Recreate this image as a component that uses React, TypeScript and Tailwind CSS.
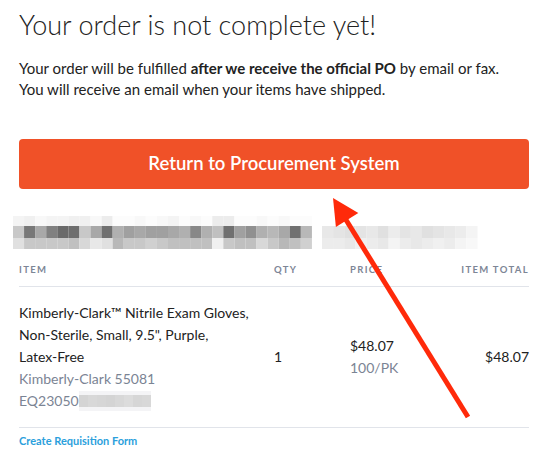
import React from "react";

const ROW1 = ["f4","f0","f8","f4","f4","f0","f0","f8","ec","fc","fc","f8","fc","f8","f4","fc","f8","fc","ec","ec","fc","fc","f8","fc","f8","fc","fc"];
const ROW2 = ["c8","78","a8","80","6a","6e","c8","a8","70","b0","a0","a8","a0","a0","a8","b0","88","b0","c0","70","a0","90","b0","b8","a8","70","b8"];
const ROW3 = ["e0","c8","c8","c8","c8","c0","d8","e8","e0","b8","c8","c8","d0","c8","c0","c0","c0","c0","f0","c8","c0","c0","d8","c8","b8","c0","d0"];
const RROW2 = ["e8","e4","e0","e4","e8","e0","ec","e4","e8","e0","e4","e8","ec","f4"];
const RROW3 = ["ec","ec","e8","f0","ec","e8","f4","ec","e8","ec","f0","ec","f4","f8"];

function Mosaic() {
  const g = (v: string) => `#${v}${v}${v}`;
  return (
    <svg width="480" height="33" className="block">
      {ROW1.map((v, i) => (
        <rect key={"a" + i} x={i * 11.07} y={0} width={11.1} height={10} fill={g(v)} />
      ))}
      {ROW2.map((v, i) => (
        <rect key={"b" + i} x={i * 11.07} y={10} width={11.1} height={12} fill={g(v)} />
      ))}
      {ROW3.map((v, i) => (
        <rect key={"c" + i} x={i * 11.07} y={22} width={11.1} height={11} fill={g(v)} />
      ))}
      {RROW2.map((v, i) => (
        <rect key={"d" + i} x={309 + i * 11.1} y={10} width={11.2} height={12} fill={g(v)} />
      ))}
      {RROW3.map((v, i) => (
        <rect key={"e" + i} x={309 + i * 11.1} y={22} width={11.2} height={11} fill={g(v)} />
      ))}
    </svg>
  );
}

function SkuBlur() {
  const cols = ["d4", "d8", "d6", "d4", "d8", "dc", "d6", "d8"];
  return (
    <svg width="72" height="20" className="inline-block align-middle">
      <rect x="0" y="0" width="72" height="20" fill="#f4f4f6" />
      {cols.map((v, i) => (
        <rect key={i} x={i * 9} y={4} width={9.2} height={12} fill={`#${v}${v}${v}`} />
      ))}
    </svg>
  );
}

export default function App() {
  return (
    <div className="relative w-[558px] h-[463px] overflow-hidden bg-white text-[#222] font-['Lato',sans-serif]">
      <div className="pl-[19px] pr-[29px] pt-[6px]">
        <h1 className="text-[27px] font-light leading-[38px] text-[#222]">
          Your order is not complete yet!
        </h1>
        <p className="mt-[14px] text-[15px] leading-[21px] text-[#222]">
          Your order will be fulfilled{" "}
          <span className="font-bold">after we receive the official PO</span> by
          email or fax.
          <br />
          You will receive an email when your items have shipped.
        </p>

        <button className="mt-[38.5px] w-full h-[50px] rounded-[4px] bg-[#F05128] text-white text-[18.5px] font-semibold">
          Return to Procurement System
        </button>
      </div>

      <div className="mt-[27px] pl-[13px]">
        <Mosaic />
      </div>

      <div className="pl-[19px] pr-[29px]">
        <div className="grid grid-cols-[255px_76px_1fr_auto] pt-[15px] pb-[10px] leading-[12px] border-b border-[#e1e4ea] text-[9.5px] font-bold tracking-[0.14em] text-[#7d8696]">
          <div>ITEM</div>
          <div>QTY</div>
          <div>PRICE</div>
          <div className="text-right">ITEM TOTAL</div>
        </div>

        <div className="grid grid-cols-[255px_76px_1fr_auto] items-center pt-[15px] pb-[15px] border-b border-[#e1e4ea] text-[14px] leading-[22px]">
          <div>
            <div className="max-w-[240px] text-[#222]">
              Kimberly-Clark™ Nitrile Exam Gloves, Non-Sterile, Small, 9.5",
              Purple, <span className="whitespace-nowrap">Latex-Free</span>
            </div>
            <div className="text-[#7b8494]">Kimberly-Clark 55081</div>
            <div className="text-[#7b8494] flex items-center">
              EQ23050
              <SkuBlur />
            </div>
          </div>
          <div>1</div>
          <div>
            <div>$48.07</div>
            <div className="text-[#7b8494]">100/PK</div>
          </div>
          <div className="text-right">$48.07</div>
        </div>

        <a className="block mt-[6px] leading-[14px] text-[11px] font-bold text-[#2ba0dc]">
          Create Requisition Form
        </a>
      </div>

      <svg className="absolute left-0 top-0 pointer-events-none" width="558" height="463">
        <line x1="343" y1="215" x2="468" y2="417" stroke="#FF2A0A" strokeWidth="5" />
        <polygon points="333,198 335.9,227 358.3,213" fill="#FF2A0A" />
      </svg>
    </div>
  );
}
